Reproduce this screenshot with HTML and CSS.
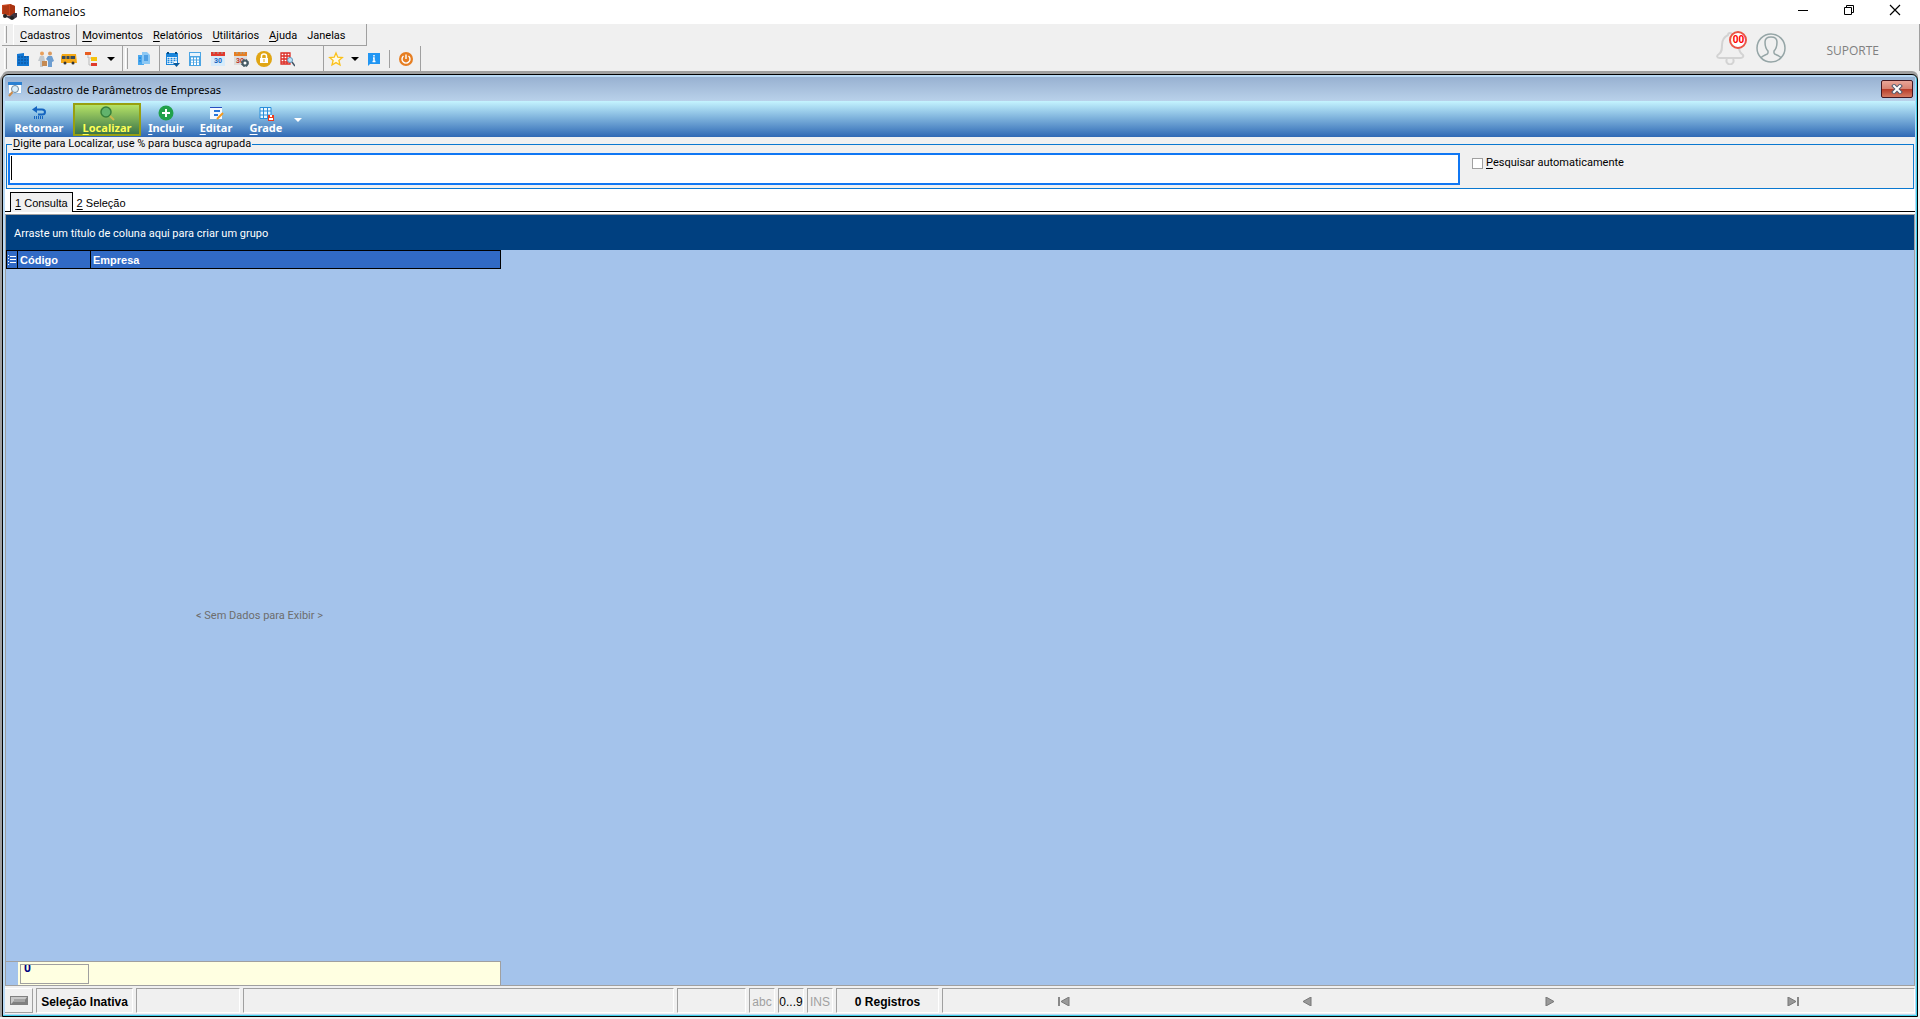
FILE: index.html
```html
<!DOCTYPE html>
<html lang="pt-BR">
<head>
    <meta charset="UTF-8">
    <meta name="viewport" content="width=device-width, initial-scale=1.0">
    <title>Romaneios</title>
    <link rel="stylesheet" href="styles.css">
</head>
<body>
    <header class="titlebar">
        <svg class="app-icon" width="16" height="16" viewBox="0 0 16 16">
            <path d="M0 1 8 0 13 2V10L8 12 0 10Z" fill="#c8431c"/>
            <path d="M8 0 13 2V10L8 12Z" fill="#a93412"/>
            <path d="M2 2V10M4 2V10M6 1V11" stroke="#96300f" stroke-width="1"/>
            <path d="M1 11 8 12 12 9H15V13L12 15H8Z" fill="#3c3440"/>
            <circle cx="3" cy="12" r="2" fill="#222"/><circle cx="10" cy="14" r="2" fill="#222"/>
        </svg>
        <span class="app-title">Romaneios</span>
        <button class="win-btn" aria-label="Minimizar"><svg width="12" height="12"><path d="M1 6.5H11" stroke="#000"/></svg></button>
        <button class="win-btn" aria-label="Restaurar"><svg width="12" height="12" fill="none" stroke="#000"><path d="M1.5 3.5H8.5V10.5H1.5ZM3.5 3.5V1.5H10.5V8.5H8.5"/></svg></button>
        <button class="win-btn" aria-label="Fechar"><svg width="12" height="12"><path d="M1 1 11 11M11 1 1 11" stroke="#000" stroke-width="1.2"/></svg></button>
    </header>

    <div class="top">
        <div class="bars">
            <nav class="menubar">
                <span class="grip"></span>
                <button class="menu active"><u>C</u>adastros</button>
                <button class="menu"><u>M</u>ovimentos</button>
                <button class="menu"><u>R</u>elatórios</button>
                <button class="menu"><u>U</u>tilitários</button>
                <button class="menu"><u>A</u>juda</button>
                <button class="menu">Janelas</button>
            </nav>
            <div class="toolbars">
                <div class="toolbar first">
                    <span class="grip"></span>
                    <button class="tool" aria-label="Empresas"><svg viewBox="0 0 16 16"><path d="M2 3 9 2V5H14V15H2Z" fill="#1277d3"/><path d="M3 6H13M3 9H13M3 12H13" stroke="#0a4d92" stroke-dasharray="2 1"/></svg></button>
                    <button class="tool" aria-label="Pessoas"><svg viewBox="0 0 16 16"><circle cx="4" cy="2.5" r="2" fill="#e8a05c"/><circle cx="12" cy="2.5" r="2" fill="#d99a60"/><path d="M2 5H6L7 10H5V16H2V10H0Z" fill="#c3c9ce"/><path d="M10 5H14L16 10 14 11V16H10V10L8 8Z" fill="#6e9ed0"/><path d="M4 10H9V15H4Z" fill="#c58a52"/></svg></button>
                    <button class="tool" aria-label="Veículos"><svg viewBox="0 0 16 16"><path d="M1 3H15L16 12H0V6Z" fill="#f5a916"/><path d="M1 5H14V8H1Z" fill="#384a5c"/><path d="M5 5V8M9 5V8" stroke="#f5a916"/><circle cx="4" cy="12" r="1.500" fill="#333"/><circle cx="12" cy="12" r="1.500" fill="#333"/></svg></button>
                    <button class="tool" aria-label="Estrutura"><svg viewBox="0 0 16 16"><path d="M4 4V7H7M5 8V14H8" fill="none" stroke="#bbb"/><path d="M1 1H7V4H1Z" fill="#e85d20"/><path d="M7 6H13V10H7Z" fill="#f4c20d"/><path d="M7 12H13V15H7Z" fill="#df3b2b"/></svg></button>
                    <button class="drop" aria-label="Mais cadastros"><svg width="8" height="4"><path d="M0 0H8L4 4Z"/></svg></button>
                </div>
                <div class="toolbar copy">
                    <span class="grip"></span>
                    <button class="tool" aria-label="Copiar"><svg viewBox="0 0 16 16"><path d="M2 4H8V14H2Z" fill="#4aa8ee"/><path d="M6 1H11L14 4V13H6Z" fill="#8cc8f4"/><path d="M8 5H12M8 7H12M8 9H12M3 7H5M3 10H5" stroke="#1277d3"/></svg></button>
                </div>
                <div class="toolbar agenda">
                    <button class="tool" aria-label="Calendário"><svg viewBox="0 0 16 16"><path d="M2 2H14V14H2Z" fill="#1b86dc"/><path d="M3 6H13V13H3Z" fill="#fff"/><path d="M3.500 7.500H13M3.500 9.500H13M3.500 11.500H10" stroke="#1b86dc" stroke-width="1.300" stroke-dasharray="2 1"/><path d="M9 12H16L12.500 16Z" fill="#0a5a9c"/><path d="M4 1V3M12 1V3" stroke="#0b4d80" stroke-width="2"/></svg></button>
                    <button class="tool" aria-label="Calculadora"><svg viewBox="0 0 16 16"><path d="M2 1H14V15H2Z" fill="#4ca5e3"/><path d="M3 2H13V5H3Z" fill="#e7f4fd"/><path d="M4 7.500H13M4 10.500H13M4 13H13" stroke="#fff" stroke-width="2" stroke-dasharray="2 1"/></svg></button>
                    <button class="tool" aria-label="Dia 30"><svg viewBox="0 0 16 16"><rect x="1" y="1" width="14" height="14" fill="#d7ebfa"/><path d="M1 1H15V5H1Z" fill="#e2392c"/><path d="M4 1V3M8 1V3M12 1V3" stroke="#9aa"/><text x="8" y="12" class="day">30</text></svg></button>
                    <button class="tool" aria-label="Configurar agenda"><svg viewBox="0 0 16 16"><rect x="1" y="1" width="13" height="13" fill="#ddd"/><path d="M1 1H14V5H1Z" fill="#e67e22"/><path d="M4 1V3M8 1V3M11 1V3" stroke="#9aa"/><text x="7" y="12" class="day red">30</text><circle cx="12" cy="12" r="2.500" fill="#fff" stroke="#455a64" stroke-width="2"/><circle cx="12" cy="12" r="3.700" fill="none" stroke="#455a64" stroke-dasharray="1.500 1.500"/></svg></button>
                    <button class="tool" aria-label="Bloquear"><svg viewBox="0 0 16 16"><circle cx="8" cy="8" r="8" fill="#e0a514"/><path d="M4 7H12V12H4Z" fill="#fff"/><path d="M5.500 7V5Q5.500 3 8 3T10.500 5V7" fill="none" stroke="#fff" stroke-width="1.500"/><path d="M8 8V11" stroke="#e0a514"/></svg></button>
                    <button class="tool" aria-label="Consultar grade"><svg viewBox="0 0 16 16"><path d="M2 2H11V13H2ZM2 5H11M2 8H11M2 11H11M5 2V13M8 2V13" fill="#fff" stroke="#dc2c25" stroke-width="1.300"/><circle cx="11" cy="9" r="2.500" fill="#bfe2f7" stroke="#6298bd"/><path d="M13 11 16 15" stroke="#456" stroke-width="1.500"/></svg></button>
                </div>
                <div class="toolbar last">
                    <button class="tool" aria-label="Favoritos"><svg viewBox="0 0 16 16"><path d="M8 2 9.800 6.200 14.300 6.500 10.900 9.500 12 14 8 11.600 4 14 5.100 9.500 1.700 6.500 6.200 6.200Z" fill="#fffbe6" stroke="#fbc11a" stroke-width="1.300"/></svg></button>
                    <button class="drop" aria-label="Lista de favoritos"><svg width="8" height="4"><path d="M0 0H8L4 4Z"/></svg></button>
                    <button class="tool" aria-label="Informações"><svg viewBox="0 0 16 16"><path d="M2 2H14V13H4L2 15Z" fill="#2196f3"/><path d="M8 4V5.500M7 7H8V10.500M6.500 10.500H9.500" fill="none" stroke="#fff" stroke-width="1.500"/></svg></button>
                    <span class="divider"></span>
                    <button class="tool" aria-label="Sair"><svg viewBox="0 0 16 16"><circle cx="8" cy="8" r="7" fill="#e67e22"/><path d="M5.500 5A4 4 0 1 0 10.500 5M8 3.500V8" fill="none" stroke="#fff" stroke-width="1.400"/></svg></button>
                </div>
            </div>
        </div>
        <div class="account">
            <button class="bell" aria-label="Notificações">
                <svg width="30" height="34" viewBox="0 0 30 34" fill="none" stroke="#d3d3d3" stroke-width="2">
                    <path d="M12 4A2 2 0 0 1 16 4C22 6 23 10 23 16 23 20 24 22 27 24 28 26 26 27 24 27H4C1 27 0 25 3 23 6 21 6 18 6 14 6 9 8 6 12 4Z"/>
                    <path d="M11 28A3.500 3.500 0 1 0 17 28"/>
                </svg>
                <span class="badge">00</span>
            </button>
            <button class="user" aria-label="Usuário">
                <svg width="30" height="30" viewBox="0 0 30 30" fill="none" stroke="#95a5a6" stroke-width="1.500">
                    <circle cx="15" cy="15" r="14"/>
                    <path d="M5 25C6 22 12 22 12 20V18C9 15 9 12 9 9 9 6 11 4 15 4S21 6 21 9C21 12 21 15 18 18V20C18 22 24 22 25 25"/>
                </svg>
            </button>
            <span class="user-name">SUPORTE</span>
        </div>
    </div>

    <main class="window">
        <div class="window-title">
            <svg width="16" height="16" viewBox="0 0 16 16"><path d="M1.500 1.500H14.500V12.500H1.500Z" fill="#fff" stroke="#9ac3ea"/><path d="M1 1H15V4H1Z" fill="#2a80d2"/><circle cx="8" cy="8" r="3.500" fill="#d9eefa" stroke="#71889c"/><path d="M5.500 11 2 15" stroke="#c98a4a" stroke-width="2"/></svg>
            <h1>Cadastro de Parâmetros de Empresas</h1>
            <button class="close" aria-label="Fechar cadastro"><svg width="12" height="10" viewBox="0 0 12 10"><path d="M3 2 9 8M9 2 3 8" stroke="#555d70" stroke-width="4" stroke-linecap="square"/><path d="M3 2 9 8M9 2 3 8" stroke="#fff" stroke-width="2" stroke-linecap="square"/></svg></button>
        </div>

        <div class="actions">
            <button class="action wide"><svg viewBox="0 0 16 16"><path d="M4 4.500H11Q14 4.500 14 7T11 9.500H7" fill="none" stroke="#1565c0" stroke-width="2"/><path d="M6 1V8L1 4.500Z" fill="#1565c0"/><path d="M3 12.500H13" stroke="#1565c0" stroke-width="3" stroke-dasharray="1 1"/></svg><span>Retornar</span></button>
            <button class="action wide selected"><svg viewBox="0 0 16 16"><circle cx="7" cy="7" r="5" fill="#62b36d" stroke="#37803c" stroke-width="1.500"/><path d="M11 11 15 15" stroke="#c9b84c" stroke-width="2"/></svg><span><u>L</u>ocalizar</span></button>
            <button class="action"><svg viewBox="0 0 16 16"><circle cx="8" cy="8" r="7.500" fill="#21a14b"/><path d="M8 4V12M4 8H12" stroke="#fff" stroke-width="2"/></svg><span><u>I</u>ncluir</span></button>
            <button class="action"><svg viewBox="0 0 16 16"><path d="M2 2H14V14H2Z" fill="#f4f9ff"/><path d="M2 2H14V3H2Z" fill="#264fc0"/><path d="M6 6H12M6 10H10" stroke="#2676dc" stroke-width="2"/><path d="M9 14 15 8" stroke="#f39a1f" stroke-width="2"/></svg><span><u>E</u>ditar</span></button>
            <button class="action"><svg viewBox="0 0 16 16"><path d="M2 2.500H13V13.500H2ZM2 6H13M2 10H13M5.500 2V14M9.500 2V14" fill="#e7f6ff" stroke="#288edb"/><path d="M10 10H16V16H10Z" fill="#ed3a1b"/><path d="M12 10H14V12H12ZM11 13H15V15H11Z" fill="#fff"/></svg><span><u>G</u>rade</span></button>
            <button class="more" aria-label="Mais ações"><svg width="8" height="4"><path d="M0 0H8L4 4Z" fill="#fff"/></svg></button>
        </div>

        <div class="search-area">
            <fieldset class="search">
                <legend><label for="busca"><u>D</u>igite para Localizar, use % para busca agrupada</label></legend>
                <div class="search-row">
                    <div class="search-box"><input type="text" id="busca"></div>
                    <div class="search-option">
                        <input type="checkbox" id="auto">
                        <label for="auto"><u>P</u>esquisar automaticamente</label>
                    </div>
                </div>
            </fieldset>
        </div>

        <div class="tabs">
            <button class="tab current"><span><u>1</u> Consulta</span></button>
            <button class="tab"><span><u>2</u> Seleção</span></button>
        </div>

        <section class="grid">
            <div class="group-panel">Arraste um título de coluna aqui para criar um grupo</div>
            <div class="grid-body">
                <table>
                    <thead>
                        <tr>
                            <th class="indicator"><svg width="8" height="10"><path d="M2 1.500H8M2 4.500H8M2 7.500H8" stroke="#fff"/><path d="M0 .500H1M0 3.500H1M0 6.500H1M0 9.500H1" stroke="#fff"/></svg></th>
                            <th class="code">Código</th>
                            <th>Empresa</th>
                        </tr>
                    </thead>
                    <tbody>
                        <tr><td colspan="3" class="empty">&lt; Sem Dados para Exibir &gt;</td></tr>
                    </tbody>
                    <tfoot>
                        <tr>
                            <td class="foot-indicator"></td>
                            <td class="foot"><div class="total">0</div></td>
                            <td class="foot"></td>
                        </tr>
                    </tfoot>
                </table>
            </div>
        </section>

        <footer class="statusbar">
            <button class="status-btn" aria-label="Seleção"><svg width="18" height="9"><path d="M0 0H18V9H0Z" fill="#808080"/><path d="M1 1H17L14 5H4L1 8Z" fill="#c8c8c8"/><path d="M4 3H15V6H4Z" fill="#a5a5a5"/></svg></button>
            <div class="pane pane-sel">Seleção Inativa</div>
            <div class="pane pane-a"></div>
            <div class="pane pane-b"></div>
            <div class="pane pane-c"></div>
            <div class="pane pane-key off">abc</div>
            <div class="pane pane-key">0...9</div>
            <div class="pane pane-key off">INS</div>
            <div class="pane pane-count">0 Registros</div>
            <div class="pane pager">
                <button aria-label="Primeiro"><svg width="12" height="9"><path d="M1 0V9" stroke="#888" stroke-width="2"/><path d="M11 0V9L3 4.500Z" fill="#999" stroke="#777"/></svg></button>
                <button aria-label="Anterior"><svg width="12" height="9"><path d="M10 0V9L2 4.500Z" fill="#999" stroke="#777"/></svg></button>
                <button aria-label="Próximo"><svg width="12" height="9"><path d="M2 0V9L10 4.500Z" fill="#999" stroke="#777"/></svg></button>
                <button aria-label="Último"><svg width="12" height="9"><path d="M11 0V9" stroke="#888" stroke-width="2"/><path d="M1 0V9L9 4.500Z" fill="#999" stroke="#777"/></svg></button>
            </div>
        </footer>
    </main>
</body>
</html>
```

FILE: styles.css
```css
*{
    box-sizing: border-box;
}
body{
    margin: 0;
    height: 100vh;
    display: flex;
    flex-direction: column;
    background-color: #f0f0f0;
    font-family: Roboto, "Noto Sans", sans-serif;
    font-size: 11px;
    line-height: 14px;
    color: #000;
}
button{
    display: flex;
    align-items: center;
    justify-content: center;
    margin: 0;
    padding: 0;
    border: none;
    background: none;
    font: inherit;
    color: inherit;
    white-space: nowrap;
}
svg{
    flex-shrink: 0;
}
u{
    text-underline-offset: 2px;
}

/* main window */
.titlebar{
    display: flex;
    align-items: center;
    height: 24px;
    background-color: #fff;
    padding: 0 2px;
}
.app-title{
    flex: 1;
    padding-left: 5px;
    font-family: "Open Sans", sans-serif;
    font-size: 12px;
}
.win-btn{
    width: 46px;
    height: 20px;
    align-self: flex-start;
}
.top{
    display: flex;
    justify-content: space-between;
    height: 47px;
    border-right: 1px solid #a0a0a0;
}
.bars{
    padding-left: 2px;
}
.menubar{
    display: flex;
    width: 365px;
    height: 22px;
    border-right: 1px solid #a0a0a0;
    border-bottom: 1px solid #a0a0a0;
}
.grip{
    width: 3px;
    margin: 2px 6px 2px 2px;
    border-left: 1px solid #fff;
    border-right: 1px solid #a0a0a0;
}
.menu{
    padding: 3px 5px 0;
}
.menu.active{
    padding: 2px 6px 0;
    border-right: 1px solid #a0a0a0;
    border-left: 1px solid #fff;
    border-top: 1px solid #fff;
}
.toolbars{
    display: flex;
    height: 25px;
}
.toolbar{
    display: flex;
    align-items: center;
    border-right: 1px solid #a0a0a0;
}
.toolbar .grip{
    align-self: stretch;
    margin-right: 4px;
}
.toolbar.first{
    width: 121px;
}
.toolbar.copy{
    width: 37px;
}
.toolbar.agenda{
    width: 164px;
}
.toolbar.last{
    width: 97px;
}
.tool{
    width: 23px;
    height: 22px;
}
.tool svg{
    width: 16px;
    height: 16px;
}
.drop{
    width: 15px;
    height: 22px;
}
.divider{
    width: 1px;
    height: 18px;
    margin: 0 4px;
    background-color: #a0a0a0;
}
.day{
    font-size: 7px;
    font-weight: bold;
    fill: #1565c0;
    text-anchor: middle;
}
.day.red{
    fill: #c0392b;
}
.account{
    display: flex;
    align-items: center;
    padding-right: 40px;
}
.bell{
    position: relative;
    margin-right: 10px;
}
.badge{
    position: absolute;
    top: 0;
    right: -1px;
    width: 18px;
    height: 18px;
    border: 2px solid #ea5545;
    border-radius: 9px;
    background-color: #fff;
    font-size: 10px;
    font-weight: bold;
    line-height: 14px;
    color: #f00;
}
.user-name{
    margin: 6px 0 0 40px;
    font-family: "Open Sans", sans-serif;
    font-size: 12px;
    color: #808080;
}

/* child window */
.window{
    flex: 1;
    min-height: 0;
    display: flex;
    flex-direction: column;
    margin: 3px 2px 2px 2px;
    border: 1px solid #000;
    border-radius: 6px 6px 0 0;
    background-color: #f0f0f0;
    box-shadow: 0 -3px 0 #a0a0a0, -2px 0 0 #a0a0a0, inset -1px -1px 0 #3fd0e8, inset 0 0 0 2px #b9d9f4;
    padding: 2px;
}
.window-title{
    display: flex;
    align-items: center;
    height: 24px;
    padding: 0 2px;
    background: linear-gradient(#98b1d1, #b9d1ea);
}
.window-title h1{
    flex: 1;
    margin: 0;
    padding: 1px 0 0 4px;
    font-family: "Noto Sans", sans-serif;
    font-size: 11px;
    font-weight: normal;
}
.close{
    width: 32px;
    height: 18px;
    border: 1px solid #431821;
    border-radius: 2px;
    background: linear-gradient(#e8a598 0%, #d78372 48%, #b63a27 50%, #d47a62 100%);
}
.actions{
    display: flex;
    height: 36px;
    padding-top: 2px;
    background: linear-gradient(#c5f4ff, #2f69b5);
}
.action{
    flex-direction: column;
    min-width: 50px;
    height: 33px;
    padding: 0 7px;
    font-family: "Noto Sans", sans-serif;
    font-size: 11px;
    font-weight: bold;
    color: #fff;
}
.action.wide{
    min-width: 68px;
}
.action svg{
    width: 16px;
    height: 16px;
}
.action.selected{
    border: 2px solid #98a010;
    padding: 0 5px;
    background: linear-gradient(#b5e266, #3b7548);
    color: #ff5;
}
.more{
    width: 14px;
}
.search-area{
    padding: 0 1px 1px;
    background: linear-gradient(#f0f0f0 52px, #fff 52px);
}
.search{
    min-width: 0;
    margin: 0;
    padding: 0 1px 3px;
    border: 1px solid #0a78d0;
}
.search legend{
    margin-left: 4px;
    padding: 0 1px;
}
.search-row{
    display: flex;
    align-items: flex-start;
    padding-top: 2px;
}
.search-box{
    flex: 33;
    position: relative;
}
.search-box::after{
    content: "";
    position: absolute;
    left: 3px;
    top: 3px;
    width: 1px;
    height: 24px;
    background-color: #000;
}
.search-box input{
    display: block;
    width: 100%;
    height: 32px;
    padding: 0 4px;
    border: 2px solid #1077f3;
    border-radius: 0;
    outline: none;
    background-color: #fff;
    font: inherit;
}
.search-option{
    flex: 10;
    display: flex;
    align-items: center;
    gap: 3px;
    padding: 3px 0 0 12px;
}
.search-option input{
    appearance: none;
    width: 11px;
    height: 11px;
    margin: 0;
    border: 1px solid #a0a0a0;
    background-color: #fff;
}

/* tabs */
.tabs{
    display: flex;
    height: 24px;
    padding: 2px 0 0 5px;
    background: linear-gradient(#fff 21px, #000 21px, #000 22px, #fff 22px);
    font-family: "Liberation Sans", Arial, sans-serif;
}
.tab{
    height: 20px;
    padding: 1px 4px 0;
}
.tab.current{
    border: 1px solid #000;
    border-bottom: none;
    background-color: #f0f0f0;
}

/* data grid */
.grid{
    flex: 1;
    min-height: 0;
    display: flex;
    flex-direction: column;
    border: 1px solid #a0a0a0;
    background-color: #a4c3eb;
}
.group-panel{
    padding: 12px 8px 9px;
    background-color: #004080;
    color: #fff;
}
.grid-body{
    flex: 1;
    min-height: 0;
}
table{
    width: 495px;
    height: 100%;
    border-spacing: 0;
    table-layout: fixed;
}
th{
    height: 19px;
    padding: 0 2px;
    border: 1px solid #000;
    border-left: none;
    background-color: #316ac5;
    font-family: "Liberation Sans", Arial, sans-serif;
    color: #fff;
    text-align: left;
}
.indicator{
    width: 12px;
    border-left: 1px solid #000;
    padding: 0 1px;
}
.code{
    width: 73px;
}
th svg{
    display: block;
}
td{
    padding: 0;
}
.empty{
    padding: 2px 0 0 12px;
    text-align: center;
    color: #6d6d6d;
}
.foot-indicator, .foot{
    height: 24px;
    border-top: 1px solid #a0a0a0;
}
.foot{
    background-color: #ffffe1;
}
.foot:last-child{
    border-right: 1px solid #a0a0a0;
}
.total{
    height: 20px;
    margin: 0 2px;
    padding-left: 3px;
    border: 1px solid #a0a0a0;
    overflow: hidden;
    font-size: 12px;
    line-height: 6px;
    font-weight: bold;
    color: #000080;
}

/* status bar */
.statusbar{
    display: flex;
    gap: 3px;
    height: 28px;
    padding: 2px 0 1px;
    font-family: "Liberation Sans", Arial, sans-serif;
    font-size: 12px;
}
.status-btn{
    width: 28px;
    border-right: 1px solid #a0a0a0;
    border-bottom: 1px solid #a0a0a0;
    border-top: 1px solid #fff;
}
.pane{
    display: flex;
    align-items: center;
    justify-content: center;
    padding-top: 2px;
    border: 1px solid #a0a0a0;
    border-right-color: #fff;
    border-bottom-color: #fff;
    white-space: nowrap;
}
.pane-sel{
    width: 97px;
    font-weight: bold;
}
.pane-a{
    width: 104px;
}
.pane-b{
    width: 431px;
}
.pane-c{
    width: 69px;
}
.pane-key{
    width: 26px;
}
.off{
    color: #a0a0a0;
}
.pane-count{
    width: 103px;
    font-weight: bold;
}
.pager{
    flex: 1;
}
.pager button{
    flex: 1;
}
```
